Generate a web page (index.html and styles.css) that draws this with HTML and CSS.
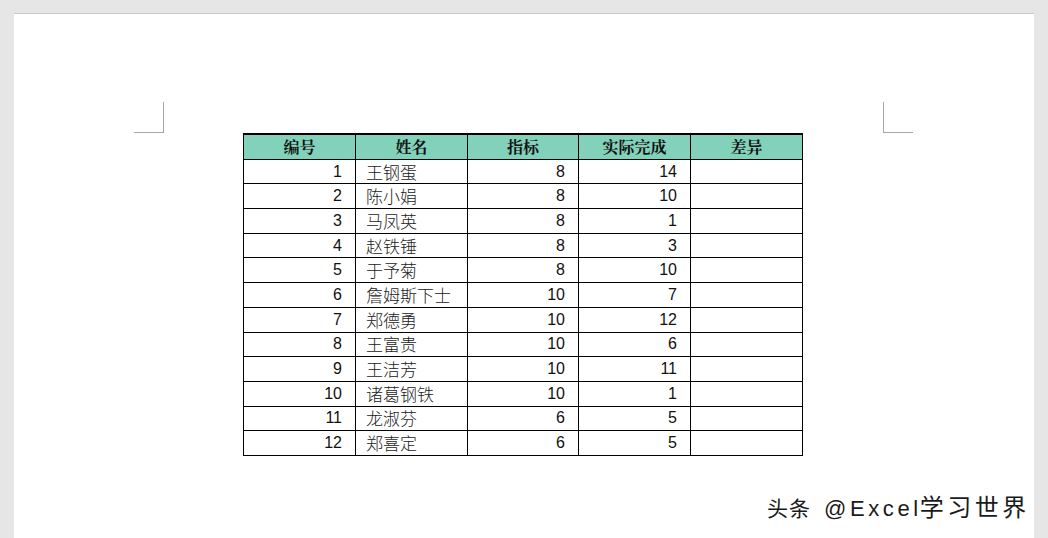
FILE: index.html
```html
<!DOCTYPE html>
<html lang="zh">
<head>
<meta charset="utf-8">
<title>表格</title>
<link rel="stylesheet" href="styles.css">
</head>
<body>
<div class="page">
  <div class="marks">
    <div class="mark mark-left"></div>
    <div class="mark mark-right"></div>
  </div>
  <table class="grid">
    <colgroup><col class="c1"><col class="c2"><col class="c3"><col class="c4"><col class="c5"></colgroup>
    <thead>
      <tr><th>编号</th><th>姓名</th><th>指标</th><th>实际完成</th><th>差异</th></tr>
    </thead>
    <tbody>
      <tr><td class="num">1</td><td class="name">王钢蛋</td><td class="num">8</td><td class="num">14</td><td></td></tr>
      <tr><td class="num">2</td><td class="name">陈小娟</td><td class="num">8</td><td class="num">10</td><td></td></tr>
      <tr><td class="num">3</td><td class="name">马凤英</td><td class="num">8</td><td class="num">1</td><td></td></tr>
      <tr><td class="num">4</td><td class="name">赵铁锤</td><td class="num">8</td><td class="num">3</td><td></td></tr>
      <tr><td class="num">5</td><td class="name">于予菊</td><td class="num">8</td><td class="num">10</td><td></td></tr>
      <tr><td class="num">6</td><td class="name">詹姆斯下士</td><td class="num">10</td><td class="num">7</td><td></td></tr>
      <tr><td class="num">7</td><td class="name">郑德勇</td><td class="num">10</td><td class="num">12</td><td></td></tr>
      <tr><td class="num">8</td><td class="name">王富贵</td><td class="num">10</td><td class="num">6</td><td></td></tr>
      <tr><td class="num">9</td><td class="name">王洁芳</td><td class="num">10</td><td class="num">11</td><td></td></tr>
      <tr><td class="num">10</td><td class="name">诸葛钢铁</td><td class="num">10</td><td class="num">1</td><td></td></tr>
      <tr><td class="num">11</td><td class="name">龙淑芬</td><td class="num">6</td><td class="num">5</td><td></td></tr>
      <tr><td class="num">12</td><td class="name">郑喜定</td><td class="num">6</td><td class="num">5</td><td></td></tr>
    </tbody>
  </table>
</div>
<div class="watermark"><span class="wm-a">头条</span><span class="wm-b">@Excel</span><span class="wm-c">学习世界</span></div>
</body>
</html>
```

FILE: styles.css
```css
html, body {
  margin: 0;
  padding: 0;
}
body {
  background: #e6e6e6;
  width: 1048px;
  height: 538px;
  overflow: hidden;
  padding: 13px 0 0 14px;
  box-sizing: border-box;
  position: relative;
  font-family: "Liberation Sans", "Noto Sans CJK SC", sans-serif;
}
.page {
  width: 1020px;
  height: 525px;
  background: #ffffff;
  border-top: 1px solid #c8c8c8;
  box-sizing: border-box;
  padding-top: 88px;
}
.marks {
  display: flex;
  justify-content: space-between;
  padding: 0 121px 0 120px;
}
.mark {
  width: 30px;
  height: 31px;
  box-sizing: border-box;
  border-bottom: 1px solid #a6a6a6;
}
.mark-left {
  border-right: 1px solid #a6a6a6;
}
.mark-right {
  border-left: 1px solid #a6a6a6;
}
.grid {
  margin-left: 229px;
  border-collapse: collapse;
  table-layout: fixed;
  width: 559px;
  border-top: 2px solid #000;
}
.grid .c1, .grid .c2, .grid .c4, .grid .c5 {
  width: 112px;
}
.grid .c3 {
  width: 111px;
}
.grid th,
.grid td {
  border: 1px solid #000;
  height: 23.7px;
  padding: 0;
  line-height: 20px;
}
.grid th {
  background: #82d1ba;
  font-family: "Noto Serif CJK SC", "Noto Sans CJK SC", serif;
  font-weight: 700;
  font-size: 16px;
  text-align: center;
  color: #111;
}
.grid td.num {
  text-align: right;
  padding-right: 13px;
  font-family: "Liberation Sans", sans-serif;
  font-size: 16px;
  color: #111;
}
.grid td.name {
  text-align: left;
  padding-left: 10px;
  font-family: "Noto Sans CJK SC", sans-serif;
  font-weight: 300;
  font-size: 17px;
  color: #222;
}
.watermark {
  position: absolute;
  left: 767px;
  top: 489px;
  display: flex;
  align-items: baseline;
  color: #1a1a1a;
  white-space: nowrap;
  line-height: 34px;
  text-shadow: 1px 1px 0 #fff, -1px -1px 0 #fff, 1px -1px 0 #fff, -1px 1px 0 #fff;
}
.wm-a {
  font-family: "Noto Sans CJK SC", sans-serif;
  font-size: 21px;
  letter-spacing: 1px;
}
.wm-b {
  margin-left: 13px;
  font-family: "Liberation Sans", sans-serif;
  font-size: 22px;
  letter-spacing: 3.6px;
}
.wm-c {
  margin-left: -2px;
  font-family: "Noto Sans CJK SC", sans-serif;
  font-size: 24px;
  letter-spacing: 3.5px;
}
```
